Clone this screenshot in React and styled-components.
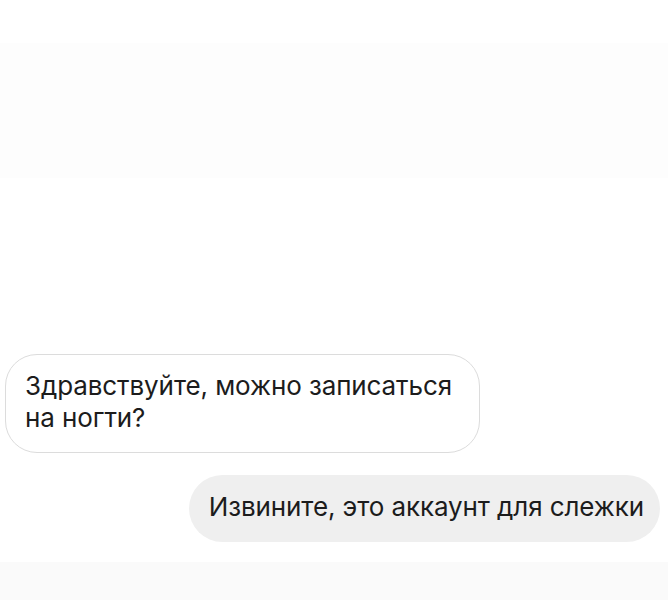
import React from "react";
import styled, { createGlobalStyle } from "styled-components";

const GlobalStyle = createGlobalStyle`
  html, body {
    margin: 0;
    padding: 0;
    background: #ffffff;
  }
  body {
    font-family: Inter, "Liberation Sans", Arial, sans-serif;
    -webkit-font-smoothing: antialiased;
  }
`;

const Screen = styled.div`
  width: 668px;
  height: 600px;
  display: flex;
  flex-direction: column;
  overflow: hidden;
  background: #ffffff;
`;

const Band = styled.div`
  flex: none;
  height: ${(p) => p.$height}px;
  margin-top: ${(p) => p.$top}px;
  background: ${(p) => p.$color};
`;

const Thread = styled.div`
  display: flex;
  flex-direction: column;
  gap: 22px;
  margin-top: 176px;
  padding: 0 8px 0 5px;
`;

const Row = styled.div`
  display: flex;
  justify-content: ${(p) => (p.$mine ? "flex-end" : "flex-start")};
`;

const Bubble = styled.div`
  box-sizing: border-box;
  max-width: 475px;
  color: #1c1c1c;
  font-size: 26px;
  line-height: 32px;
  letter-spacing: -0.1px;
  ${(p) =>
    p.$mine
      ? `
    background: #efefef;
    border-radius: 34px;
    padding: 16px 16px 19px 20px;
  `
      : `
    background: #ffffff;
    border: 1.5px solid #dcdcdc;
    border-radius: 32px;
    padding: 15px 24px 18px 19px;
  `}
`;

export default function App() {
  return (
    <>
      <GlobalStyle />
      <Screen>
        <Band $top={43} $height={135} $color="#fdfdfd" />
        <Thread>
          <Row>
            <Bubble>Здравствуйте, можно записаться на ногти?</Bubble>
          </Row>
          <Row $mine>
            <Bubble $mine>Извините, это аккаунт для слежки</Bubble>
          </Row>
        </Thread>
        <Band $top={20} $height={40} $color="#fafafa" />
      </Screen>
    </>
  );
}
